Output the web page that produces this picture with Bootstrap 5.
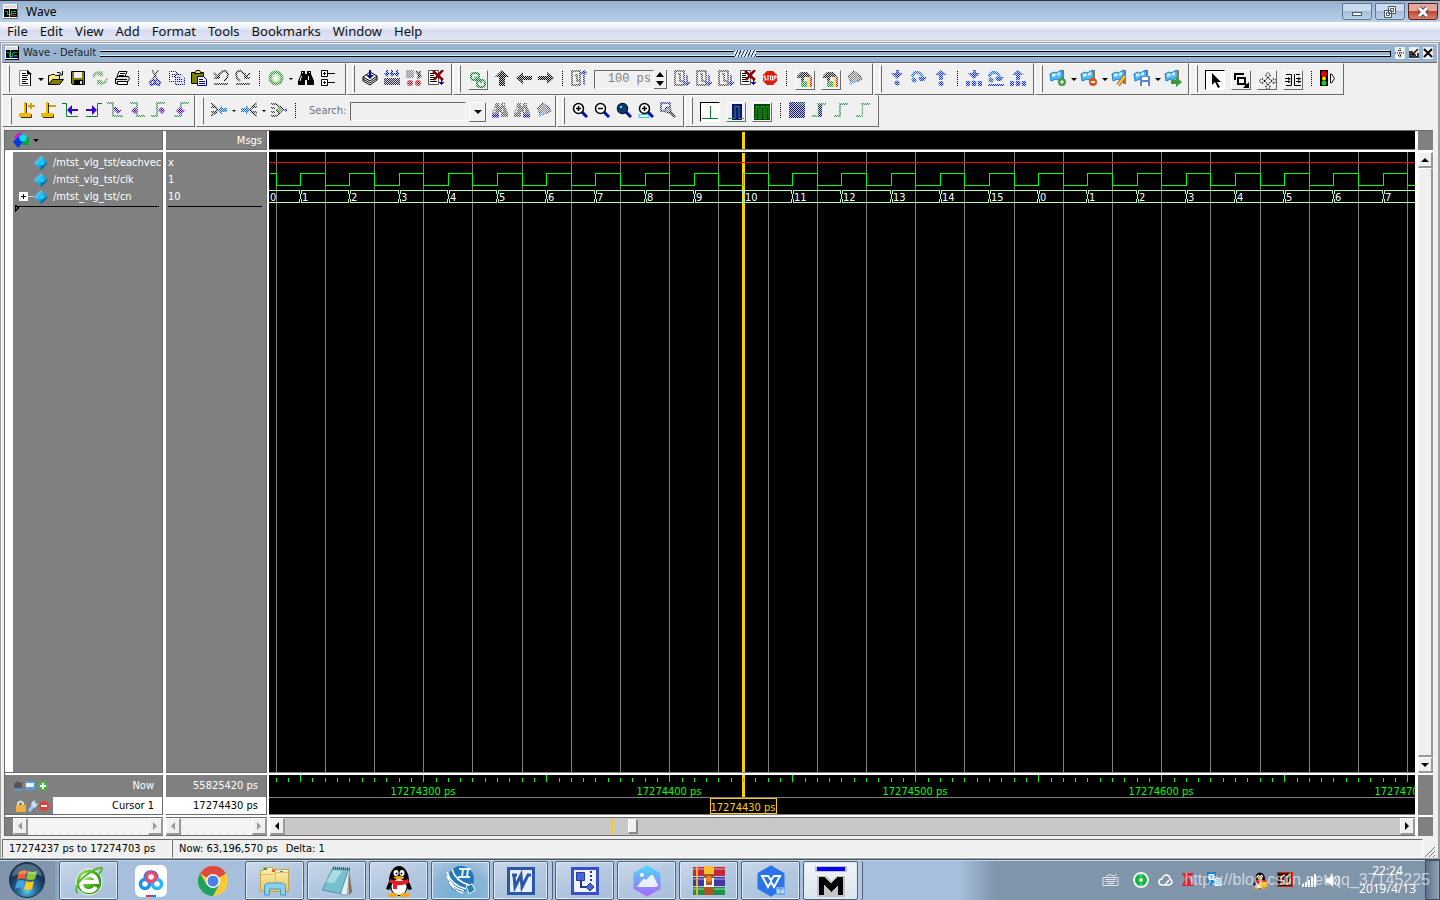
<!DOCTYPE html>
<html lang="en">
<head>
<meta charset="utf-8">
<meta name="viewport" content="width=device-width, initial-scale=1">
<title>Wave</title>
<link href="https://cdn.jsdelivr.net/npm/bootstrap@5.3.0/dist/css/bootstrap.min.css" rel="stylesheet">
<style>
:root{--face:#f0f0f0;--edge:#6b6b6b;--pane:#808080;--bar:#99b4d1}
body{font:11px/16px "DejaVu Sans Condensed","DejaVu Sans",sans-serif;color:#000;background:var(--face)}
button{border:0;padding:0;background:none;color:inherit;font:inherit}
svg{display:block;flex:none}
.crisp{shape-rendering:crispEdges}
.titlebar{height:22px;padding-left:3px;background:linear-gradient(#97b1d0,#b9d1ea);border-top:1px solid #303338;font:12px/20px "Noto Sans",sans-serif}
.caps{gap:3px;padding:2px 2px 0 0}
.cap{width:30px;height:17px;border:1px solid #5d7694;border-radius:0 0 3px 3px;background:linear-gradient(#c9dbec 45%,#a4bdd7 50%,#bdd3e8)}
.cap.shut{border-color:#5b1f22;background:linear-gradient(#e4a79b 45%,#c04a32 50%,#d88068)}
.menus{height:19px;gap:12px;padding-left:7px;background:linear-gradient(#fff,#e6eaf5 40%,#d6dcef 45%,#e0e6f6);font:13px/19px "Noto Sans",sans-serif;border-bottom:1px solid #b6bccc}
.menus a{color:#111;text-decoration:none}
.shell{border:1px solid #a0a0a0;border-width:1px 2px 1px 1px;margin-top:1px;min-height:0}
.docbar{height:19px;background:var(--bar);border-bottom:1px solid var(--edge);margin:1px 1px 0;padding-left:3px;line-height:18px;color:#1c2430}
.docbar .rails{height:7px;border-top:1px solid #d8f2fa;border-bottom:1px solid #000;border-right:1px solid #000;background:linear-gradient(#000 1px,transparent 1px 4px,#d8f2fa 4px 5px,transparent 5px);background-color:var(--bar)}
.rails i{display:block;width:22px;height:7px;background:repeating-linear-gradient(115deg,#26384c 0 1px,#d8e8f4 1px 3px)}
.mini{width:10px;height:12px;background:var(--face)}
.bars{padding-left:1px}
.grp{border:1px solid var(--edge);border-left-color:#fff;border-top-color:#fff;height:32px;padding:0 4px;margin-right:1px}
.grp::before{content:"";width:3px;height:28px;border:1px solid #fff;border-right-color:var(--edge);margin-right:4px;flex:none}
.grp.roomy{padding-right:6px}
.grp.cursors{padding:0 2px 0 6px}
.grp.tight{padding-right:0}
.tb{width:22px;height:25px;padding-bottom:3px;display:flex;align-items:center;justify-content:center;flex:none}
.drop{width:9px;height:8px;display:flex;align-items:center;justify-content:center;flex:none}
.drop::after{content:"";border:3px solid transparent;border-top-color:#000;border-bottom:0}
.drop.off{width:8px}
.drop.off::after{border-width:2px;border-bottom:0}
.sep{width:11px;height:16px;flex:none;background:repeating-linear-gradient(#000 0 1px,transparent 1px 2px) center/1px 100% no-repeat}
.off>svg{-webkit-mask:conic-gradient(#000 25%,rgba(0,0,0,.15) 0 50%,#000 0 75%,rgba(0,0,0,.15) 0) 0 0/2px 2px;mask:conic-gradient(#000 25%,rgba(0,0,0,.15) 0 50%,#000 0 75%,rgba(0,0,0,.15) 0) 0 0/2px 2px}
.boxed{width:20px;height:20px;padding:0;border:1px solid #fff;border-right-color:var(--edge);border-bottom-color:var(--edge);margin:1px 3px 0}
.boxed.slim{width:17px}
.boxed.on{background:#fff;border-color:#000 #fff #fff #000}
.sunk{border:1px solid #fff;border-top-color:var(--edge);border-left-color:var(--edge);border-radius:0;background:var(--face);height:19px;padding:0 2px;color:#808080;min-width:0}
#runlen{width:60px;font:12px "Liberation Mono",monospace}
#search{width:116px}
.spin{width:13px;height:19px;border-right:1px solid var(--edge);border-bottom:1px solid var(--edge)}
.wavegrid{display:grid;grid-template-columns:158px 101px minmax(0,1fr) 15px;grid-template-rows:19px minmax(0,1fr) 40px 19px;gap:2px 3px;background:#fff;border:1px solid var(--edge);border-width:1px 0 0 1px;margin:3px 5px 0 3px;min-height:0}
.pane{background:var(--pane);color:#fff;border-bottom:1px solid var(--edge);border-right:1px solid var(--edge);min-width:0;overflow:hidden}
.blank{background:var(--pane)}
.scope{background:#000;border-bottom:1px solid var(--pane);margin-left:-1px;min-width:0;overflow:hidden}
.scope svg{width:100%;height:100%}
.listing{padding-top:2px}
.vals{padding:3px 4px 0 2px}
.sig{height:17px;gap:5px}
.sig.leaf{padding-left:21px}
.sig.node{padding-left:5px}
.sig.node svg+svg{margin-left:-5px}
.nowrow{height:22px}
.currow{height:17px;line-height:18px;background:#fff;color:#000}
.sbar{display:flex;border-top:1px solid var(--edge);border-bottom:1px solid var(--edge)}
.sbtn{width:15px;background:var(--face);border:1px solid #fff;border-right:2px solid #999;border-bottom:2px solid #999;display:flex;align-items:center;justify-content:center;flex:none}
.sbtn.tall{height:16px}
.hatch{background:conic-gradient(#fff 25%,#eee 0 50%,#fff 0 75%,#eee 0) 0 0/2px 2px}
.track{background:#c8c8c8;position:relative}
.thumb{position:absolute;top:1px;bottom:1px;width:10px;background:var(--face);border:1px solid #fff;border-right:2px solid #888;border-bottom:2px solid #888}
.mark-at{position:absolute;top:1px;bottom:1px;width:2px;background:#ffd000}
.status{height:19px;margin:3px 1px 0}
.status .cell{border:1px solid #fff;border-top-color:var(--edge);border-left-color:var(--edge);padding-left:6px;line-height:18px}
.range{width:170px}
.taskbar{height:41px;border-top:1px solid #46586c;position:relative;background:linear-gradient(90deg,#8195ad 0,#8195ad 54px,#a5bfdc 62px,#a5bfdc 66.6%,#8094aa 69.2%);box-shadow:inset 0 1px #c0d4e8}
.start{width:59px}
.task{width:59px;height:39px;margin-right:3px;margin-top:1px;display:flex;align-items:center;justify-content:center;border:1px solid transparent;border-radius:2px;flex:none}
.task.open{border-color:#4f637b;background:linear-gradient(160deg,#cbd8e9,#b3c8e0 50%,#a8bfdb);box-shadow:inset 0 0 0 1px #dde7f2}
.task.lit{background:radial-gradient(circle at 50% 90%,#6eb0d8,#8bb5d6 60%,#b4cce2)}
.task.front{background:linear-gradient(#f2f6fa,#dbe5f0)}
.task.pile{width:55px;margin-right:7px;box-shadow:inset 0 0 0 1px #dde7f2,4px 0 #b3c8e0,5px 0 #4f637b}
.tray{gap:9px}
.tray .gap-in{width:12px}
.clock{font:12px/18px "Noto Sans",sans-serif;color:#fff}
.peek{width:15px;border:1px solid #3f4f62;background:linear-gradient(90deg,#5d7086,#93a4b6)}
.stamp{position:absolute;right:10px;top:9px;font:16px/22px "Liberation Sans",sans-serif;color:rgba(255,255,255,.62)}
</style>
</head>
<body class="vh-100 overflow-hidden d-flex flex-column">

<svg width="0" height="0" class="position-absolute" aria-hidden="true">
<defs>
<linearGradient id="cy" x2="1" y2="1"><stop stop-color="#9ee8ff"/><stop offset=".5" stop-color="#10b0e8"/><stop offset="1" stop-color="#0560a0"/></linearGradient>
<linearGradient id="fold" x2="0" y2="1"><stop stop-color="#fdf3b8"/><stop offset="1" stop-color="#e9c65c"/></linearGradient>
<linearGradient id="pic" x2="0" y2="1"><stop stop-color="#4fd3fb"/><stop offset="1" stop-color="#a66cff"/></linearGradient>
<radialGradient id="orb" cx=".5" cy=".8"><stop stop-color="#5fd0f0"/><stop offset=".5" stop-color="#2a6c9c"/><stop offset="1" stop-color="#173a5c"/></radialGradient>
<radialGradient id="ball" cx=".35" cy=".3"><stop stop-color="#b8f080"/><stop offset="1" stop-color="#34a010"/></radialGradient>
<symbol id="app" viewBox="0 0 16 16"><path fill="#777" d="M0 0h16v16H0z"/><path fill="#fff" d="M0 0h15v15H0z"/><path fill="#ddd" d="M1 1h13v3H1z"/><path d="M1 5h14v9H1z"/><path fill="none" stroke="#1fb040" d="M2 7.500h3v4h4v-4h5M10 10.500h4"/><path stroke="#e7d31a" d="M6.500 5v9"/><path stroke="#d02030" d="M9 12.500h5"/></symbol>
<symbol id="appb" viewBox="0 0 16 16"><path d="M0 0h16v16H0z"/><path fill="#fff" d="M0 0h15v15H0z"/><path fill="#ddd" d="M1 1h13v3H1z"/><path d="M1 5h14v9H1z"/><path fill="none" stroke="#1fb040" d="M2 7.500h3v4h4v-4h5M10 10.500h4"/><path stroke="#20c8d8" d="M6.500 5v9"/><path stroke="#2030d0" d="M9 12.500h5"/></symbol>
<symbol id="new" viewBox="0 0 16 16"><path fill="#fff" stroke="#888" d="M2.500.5h8l3 3v12h-11z"/><path stroke="#000" d="M5 3.500h4M5 5.500h6M5 7.500h5M5 9.500h6M5 11.500h4M5 13.500h6M13.500 4v12M10.500 0v4h4"/></symbol>
<symbol id="folder" viewBox="0 0 16 16"><path fill="#ffef70" stroke="#000" d="M.5 14.500v-9h2l1-1h3l1 1h4v4"/><path fill="#808000" stroke="#000" d="M.5 14.500l4-5h11l-4 5z"/><path fill="none" stroke="#000" d="M9 2.500h2l2 1 1 1M14.500 1v4h-4"/></symbol>
<symbol id="disk" viewBox="0 0 16 16"><path fill="#808000" stroke="#000" d="M1.500 1.500h13v13h-12l-1-1z"/><path fill="#eee" d="M4 2h8v6H4z"/><path d="M4 10h9v4H4z"/><path fill="#ddd" d="M10 11h2v3h-2z"/></symbol>
<symbol id="cycle" viewBox="0 0 16 16"><path fill="#60a060" d="M0 7l2-4 4-2 4 1 1-1v5H6l1-2-3 1-2 3zM16 8l-2 5-4 2-4-1-1 1v-5h5l-1 2 4-1 2-3z"/></symbol>
<symbol id="print" viewBox="0 0 16 16"><path fill="#fff" stroke="#000" d="M5 1.500h8l-2 5H3z"/><path fill="#ddd" stroke="#000" d="M1.500 8.500l3-2h10l1 2-3 5h-11z"/><path fill="#fff" stroke="#000" d="M3.500 11.500h10v3h-10zM6 3.500h5M5 5.500h5M1 9.500h12"/></symbol>
<symbol id="cut" viewBox="0 0 16 16"><path fill="none" stroke="#223" stroke-width="1.500" d="M5 0l5 9M11 0L6 9"/><g fill="none" stroke="#0000ff" stroke-width="2"><path d="M7 9l-4 3 1 3 3-1 1-4M9 9l4 3-1 3-3-1-1-4"/></g></symbol>
<symbol id="copy" viewBox="0 0 16 16"><path fill="#fff" stroke="#222" d="M.5 1.500h6l3 3v7h-9z"/><path fill="#ddf" stroke="#001090" d="M6.500 4.500h6l3 3v7h-9z"/><path stroke="#001090" d="M8 7.500h4M8 9.500h6M8 11.500h6M2 4.500h4M2 6.500h4"/></symbol>
<symbol id="paste" viewBox="0 0 16 16"><path fill="#808000" stroke="#000" d="M.5 2.500h12v11H.5z"/><path fill="#ffe840" stroke="#000" d="M3.500 3.500l2-3h3l2 3z"/><path fill="#fff" stroke="#000080" d="M6.500 6.500h6l3 3v6h-9z"/><path stroke="#000080" d="M8 9.500h4M8 11.500h6M8 13.500h6"/></symbol>
<symbol id="undo" viewBox="0 0 16 16"><path fill="none" stroke="#000" stroke-width="1.500" d="M1 3l5 5M6 3v5H1M7 4l3-3h3l2 3-1 4-3 3M1 14h14"/></symbol>
<symbol id="globe" viewBox="0 0 16 16"><circle cx="8" cy="8" r="6" fill="#aee7a6" stroke="#3a9a3a" stroke-width="3"/><path fill="#fff" d="M6 4l5 4-5 4z"/></symbol>
<symbol id="find" viewBox="0 0 16 16"><path d="M3 1h4v3h2V1h4v3l3 7v4H9v-5H7v5H0v-4l3-7z"/><path stroke="#fff" d="M3.500 6L2 11M10.500 6v4M4.500 2v1M11.500 2v1"/></symbol>
<symbol id="tree" viewBox="0 0 16 16"><path fill="#fff" stroke="#000" d="M1.500.5h6v6h-6zM1.500 9.500h6v6h-6zM8 3.500h7M8 12.500h7M3 3.500h3M4.500 2v3M3 12.500h3M4.500 11v3"/></symbol>
<symbol id="stack" viewBox="0 0 16 16"><path fill="#fff" stroke="#000" d="M1 11l7 4 7-5M1 9l7 4 7-5M1 7l7 4 7-5-7-4zM1 7v4M15 6v4"/><path fill="#001090" d="M7 0h2v5h3L8 9 4 5h3z"/></symbol>
<symbol id="rain" viewBox="0 0 16 16"><path fill="#334" d="M0 8h16v7H0z"/><path fill="#0010b0" d="M2 0h2v3h2L3 7 0 3h2zM7 0h2v3h2L8 7 5 3h2zM12 0h2v3h2l-3 4-3-4h2z"/></symbol>
<symbol id="brk" viewBox="0 0 16 16"><path fill="#889" d="M0 0h8v8H0z"/><path stroke="#222" stroke-width="2" d="M10 1l5 6M14 1l-2 8"/><circle cx="4" cy="13" r="3" fill="#d01020"/><circle cx="12" cy="13" r="3" fill="#d01020"/></symbol>
<symbol id="pagex" viewBox="0 0 16 16"><path fill="#fff" stroke="#555" d="M.5.500h10v14H.5z"/><path stroke="#000" d="M2 3.500h6M2 5.500h4M2 7.500h5M2 9.500h4M2 11.500h7"/><path stroke="#8c0008" stroke-width="2.500" d="M5 1l10 9M15 0L6 10"/><path stroke="#0010b0" d="M13.500 9v6M11 12.500h5M12 13.500h3"/></symbol>
<symbol id="links" viewBox="0 0 16 16"><g fill="none" stroke="#007a20" stroke-width="2"><rect x="1" y="1" width="8" height="7" rx="3"/><rect x="7" y="8" width="8" height="7" rx="3"/><path d="M5 5l7 6"/></g></symbol>
<symbol id="aup" viewBox="0 0 16 16"><path d="M8 0l7 7h-4v9H5V7H1z"/></symbol>
<symbol id="aleft" viewBox="0 0 16 16"><path d="M0 8l7-6v4h9v4H7v4z"/></symbol>
<symbol id="pgu" viewBox="0 0 16 16"><path fill="none" stroke="#333" stroke-width="1.500" d="M1 1h8v14H1zM4 5h2v6h2"/><path fill="none" stroke="#0010b0" stroke-width="1.500" d="M13 15V1M10 4l3-3 3 3"/></symbol>
<symbol id="pgd" viewBox="0 0 16 16"><path fill="none" stroke="#333" stroke-width="1.500" d="M1 1h9v14H1zM4 4h2v7h3"/><path fill="none" stroke="#0010b0" stroke-width="1.500" d="M13 5v10M10 12l3 3 3-3"/></symbol>
<symbol id="bug" viewBox="0 0 18 18"><path fill="#222" d="M1 5l4-4h6l4 4-2 3-2-2H8v4H5V7H1z"/><path fill="#20a040" d="M5 10h6v6H5z"/><path fill="#ffe000" d="M11 6h3v10h-3z"/><path fill="#f01010" d="M14 6h2v10h-2z"/></symbol>
<symbol id="hand" viewBox="0 0 16 16"><path fill="#888" stroke="#222" d="M1 6l6-5 6 5 2 3-4 2-6 2z"/><path stroke="#70a0e0" stroke-width="3" d="M3 14l7-5"/></symbol>
<symbol id="stepin" viewBox="0 0 16 16"><path fill="#1030ff" d="M7 0h3v3h4L8 9 2 3h5z"/><circle cx="8" cy="13" r="2.500" fill="#1030ff"/></symbol>
<symbol id="stepover" viewBox="0 0 16 16"><path fill="none" stroke="#2070ff" stroke-width="3" d="M1 7c2-7 8-6 11 1"/><path fill="#1030ff" d="M7 7h9l-3 4H9z"/><circle cx="3" cy="10" r="2.500" fill="#2050f0"/></symbol>
<symbol id="stepout" viewBox="0 0 16 16"><path fill="#1840ff" d="M8 0l6 5h-4v5H6V5H2z"/><circle cx="8" cy="13.500" r="2.500" fill="#1030ff"/></symbol>
<symbol id="dots" viewBox="0 0 16 16"><path fill="#1030ff" d="M0 11h4v5H0zM6 11h4v5H6zM12 11h4v5h-4z"/></symbol>
<symbol id="flag" viewBox="0 0 18 18"><path fill="#a87838" d="M11 1h4v14h-3z"/><path fill="#56b8f4" stroke="#1c80d0" d="M1 5l4-2 2 1 6-3 1 7-5 3-2-1-5 2z"/><path fill="#c8eeff" d="M3 5l3-1 1 3-4 1zM8 4l3-1v3L8 7z"/></symbol>
<symbol id="zoom" viewBox="0 0 16 16"><path stroke="#0010c0" stroke-width="3" d="M10 10l5 5"/><circle cx="6.500" cy="6.500" r="5" fill="#fff" stroke="#000" stroke-width="1.500"/></symbol>
<symbol id="flask" viewBox="0 0 16 16"><path fill="none" stroke="#332800" d="M7.500 1v11M2 15.500h10.500v-3"/><path fill="none" stroke="#f0b800" stroke-width="2" d="M6 0v11M1 12h10v2H1z"/></symbol>
<symbol id="edgel" viewBox="0 0 18 16"><path fill="none" stroke="#0a8030" d="M0 1.500h4.500v13H16"/><path fill="#3a00d8" d="M5 8l5-5v4h6v2h-6v4z"/></symbol>
<symbol id="edgef" viewBox="0 0 16 16"><path fill="none" stroke="#0a8030" stroke-width="1.500" d="M0 1h6v13h10"/><path fill="#5000d0" d="M7 5h3l1 3h4l-4 4-4-4z"/></symbol>
<symbol id="edger" viewBox="0 0 16 16"><path fill="none" stroke="#0a8030" stroke-width="1.500" d="M1 14h7V1h8"/><path fill="#5000d0" d="M3 9l4-4 5 4-5 3z"/></symbol>
<symbol id="fan" viewBox="0 0 16 16"><path fill="none" stroke="#111" stroke-width="1.500" d="M0 1l5 4M0 5h4l3 3-3 2H0M0 14l6-4"/><path fill="#0070ff" d="M7 8l4-5v3h5v4h-5v3z"/></symbol>
<symbol id="gem" viewBox="0 0 14 14"><path fill="url(#cy)" d="M7 0l7 7-7 7-7-7z"/><path fill="#20c4ff" d="M4 5h6v4H4z"/><path fill="#075a88" d="M7 14l7-7-4 2-3 1z" opacity=".7"/></symbol>
<symbol id="rise" viewBox="0 0 16 16"><path fill="none" stroke="#0a8030" stroke-width="1.500" d="M1 14h6V2h8"/></symbol>
<symbol id="pads" viewBox="0 0 16 16"><path fill="#fff" stroke="#000" stroke-dasharray="1 1" d="M5 8l3-3 3 3-3 3zM8 5L6 3l2-3 2 3zM8 11l-2 2 2 3 2-3zM5 8L3 6 0 8l3 2zM11 8l2-2 3 2-3 2z"/></symbol>
<symbol id="penguin" viewBox="0 0 28 32"><ellipse cx="14" cy="16" rx="10" ry="15"/><path d="M5 14L1 24l3 1 4-5zM23 14l4 10-3 1-4-5z"/><ellipse cx="14" cy="22" rx="7.500" ry="8" fill="#fff"/><ellipse cx="11" cy="8" rx="2.500" ry="3" fill="#fff"/><ellipse cx="17" cy="8" rx="2.500" ry="3" fill="#fff"/><circle cx="11.500" cy="8.500" r="1"/><circle cx="16.500" cy="8.500" r="1"/><ellipse cx="14" cy="12.500" rx="5" ry="1.500" fill="#ffa800"/><path fill="#e81c24" d="M5 14q9 4 18 0l1 4q-8 3-12 2v4H8v-5l-4-2z"/><ellipse cx="8" cy="30" rx="5" ry="2" fill="#ffa800"/><ellipse cx="20" cy="30" rx="5" ry="2" fill="#ffa800"/></symbol>
</defs></svg>

<header class="titlebar d-flex align-items-center">
  <svg class="crisp" width="15" height="15"><use href="#app"/></svg><span class="ms-2">Wave</span>
  <div class="caps ms-auto d-flex align-self-start">
    <button class="cap" aria-label="Minimize"><svg class="mx-auto" width="12" height="12"><rect x="1.500" y="6.500" width="9" height="3" fill="#fff" stroke="#48586c"/></svg></button>
    <button class="cap" aria-label="Restore"><svg class="mx-auto" width="12" height="12"><path fill="#fff" stroke="#48586c" d="M4.500.5h7v7h-7zM6.500 2.500h3v3h-3zM.5 4.500h7v7h-7zM2.500 6.500h3v3h-3z"/></svg></button>
    <button class="cap shut" aria-label="Close"><svg class="mx-auto" width="12" height="12"><path stroke="#5a4048" stroke-width="5" d="M2 2l8 8M10 2l-8 8"/><path stroke="#fff" stroke-width="3" d="M2 2l8 8M10 2l-8 8"/></svg></button>
  </div>
</header>
<nav class="menus d-flex flex-shrink-0" aria-label="Main">
  <a href="#">File</a><a href="#">Edit</a><a href="#">View</a><a href="#">Add</a><a href="#">Format</a><a href="#">Tools</a><a href="#">Bookmarks</a><a href="#">Window</a><a href="#">Help</a>
</nav>

<main class="shell flex-grow-1 d-flex flex-column">
  <div class="docbar d-flex align-items-center gap-1 flex-shrink-0 pe-1">
    <svg class="crisp" width="14" height="16"><use href="#appb"/></svg><span>Wave - Default</span>
    <div class="rails flex-grow-1 d-flex justify-content-center align-items-center"><i></i></div>
    <button class="mini" aria-label="Undock"><svg width="10" height="12"><path fill="none" stroke="#000" stroke-dasharray="1 1" d="M5 1v10M0 6h10M3 3.500h4M3 8.500h4"/></svg></button>
    <button class="mini" aria-label="Dock"><svg width="10" height="12"><path fill="none" stroke="#000" stroke-width="1.500" d="M1 4v6h8V6M3 8l6-6M3 4v4h4"/></svg></button>
    <button class="mini" aria-label="Close pane"><svg width="10" height="12"><path stroke="#000" stroke-width="2" d="M1 2l8 8M9 2l-8 8"/></svg></button>
  </div>

  <div class="flex-shrink-0">
    <div class="bars d-flex">
      <div class="grp roomy d-flex align-items-center">
        <button class="tb" aria-label="New"><svg width="16" height="16"><use href="#new"/></svg></button><button class="drop" aria-label="New options"></button>
        <button class="tb" aria-label="Open"><svg width="16" height="16"><use href="#folder"/></svg></button>
        <button class="tb" aria-label="Save"><svg width="16" height="16"><use href="#disk"/></svg></button>
        <button class="tb off" aria-label="Reload"><svg width="16" height="16"><use href="#cycle"/></svg></button>
        <button class="tb" aria-label="Print"><svg width="16" height="16"><use href="#print"/></svg></button><span class="sep"></span>
        <button class="tb off" aria-label="Cut"><svg width="16" height="16"><use href="#cut"/></svg></button>
        <button class="tb off" aria-label="Copy"><svg width="16" height="16"><use href="#copy"/></svg></button>
        <button class="tb" aria-label="Paste"><svg width="16" height="16"><use href="#paste"/></svg></button>
        <button class="tb off" aria-label="Undo"><svg width="16" height="16"><use href="#undo"/></svg></button>
        <button class="tb off" aria-label="Redo"><svg width="16" height="16"><g transform="matrix(-1 0 0 1 16 0)"><use href="#undo"/></g></svg></button><span class="sep"></span>
        <button class="tb off" aria-label="Add"><svg width="16" height="16"><use href="#globe"/></svg></button><button class="drop off" aria-label="Add options"></button>
        <button class="tb" aria-label="Find"><svg width="16" height="16"><use href="#find"/></svg></button>
        <button class="tb" aria-label="Collapse"><svg width="16" height="16"><use href="#tree"/></svg></button>
      </div>
      <div class="grp d-flex align-items-center">
        <button class="tb" aria-label="Compile"><svg width="16" height="16"><use href="#stack"/></svg></button>
        <button class="tb off" aria-label="Compile all"><svg width="16" height="16"><use href="#rain"/></svg></button>
        <button class="tb off" aria-label="Simulate"><svg width="16" height="16"><use href="#brk"/></svg></button>
        <button class="tb" aria-label="Break"><svg width="16" height="16"><use href="#pagex"/></svg></button>
      </div>
      <div class="grp roomy d-flex align-items-center">
        <button class="tb boxed off" aria-label="Environment"><svg width="16" height="16"><use href="#links"/></svg></button>
        <button class="tb off" aria-label="Up"><svg width="16" height="16"><use href="#aup"/></svg></button>
        <button class="tb off" aria-label="Back"><svg width="16" height="16"><use href="#aleft"/></svg></button>
        <button class="tb off" aria-label="Forward"><svg width="16" height="16"><g transform="matrix(-1 0 0 1 16 0)"><use href="#aleft"/></g></svg></button><span class="sep"></span>
        <button class="tb off" aria-label="Restart"><svg width="16" height="16"><use href="#pgu"/></svg></button>
        <input class="sunk text-end ms-1" id="runlen" aria-label="Run length" value="100 ps">
        <div class="spin d-flex flex-column justify-content-around align-items-center"><svg width="8" height="16"><path d="M0 6l4-5 4 5zM0 10h8l-4 5z"/></svg></div>
        <button class="tb off ms-1" aria-label="Run"><svg width="16" height="16"><use href="#pgd"/></svg></button>
        <button class="tb off" aria-label="Continue run"><svg width="16" height="16"><use href="#pgd"/></svg></button>
        <button class="tb off" aria-label="Run all"><svg width="16" height="16"><use href="#pgd"/></svg></button>
        <button class="tb" aria-label="Break run"><svg width="16" height="16"><use href="#pagex"/></svg></button>
        <button class="tb" aria-label="Stop"><svg width="14" height="14" viewBox="0 0 14 14"><path fill="#e01808" d="M4 0h6l4 4v6l-4 4H4l-4-4V4z"/><path fill="none" stroke="#fff" d="M3 5H1v2h2v2H1M4 5h2.500M5 5v4.500M7.500 5h2v4h-2zM11 9.500V5h2v2h-2"/></svg></button><span class="sep"></span>
        <button class="tb boxed off" aria-label="Profile"><svg width="18" height="18"><use href="#bug"/></svg></button>
        <button class="tb boxed off" aria-label="Memory profile"><svg width="18" height="18"><use href="#bug"/></svg></button>
        <button class="tb off" aria-label="Edit"><svg width="16" height="16"><use href="#hand"/></svg></button>
      </div>
      <div class="grp d-flex align-items-center">
        <button class="tb off" aria-label="Step into"><svg width="16" height="16"><use href="#stepin"/></svg></button>
        <button class="tb off" aria-label="Step over"><svg width="16" height="16"><use href="#stepover"/></svg></button>
        <button class="tb off" aria-label="Step out"><svg width="16" height="16"><use href="#stepout"/></svg></button><span class="sep"></span>
        <button class="tb off" aria-label="Step in current"><svg width="16" height="16"><use href="#stepin"/><use href="#dots"/></svg></button>
        <button class="tb off" aria-label="Step over current"><svg width="16" height="16"><use href="#stepover"/><path stroke="#1030ff" stroke-width="2" d="M0 15h16"/></svg></button>
        <button class="tb off" aria-label="Step out current"><svg width="16" height="16"><use href="#stepout"/><use href="#dots"/></svg></button>
      </div>
      <div class="grp d-flex align-items-center">
        <button class="tb" aria-label="Add bookmark"><svg width="18" height="18"><use href="#flag"/><circle cx="13" cy="13" r="4" fill="#4a9a4a"/><path stroke="#fff" d="M11 13h4M13 11v4"/></svg></button><button class="drop" aria-label="Add bookmark options"></button>
        <button class="tb" aria-label="Delete bookmark"><svg width="18" height="18"><use href="#flag"/><circle cx="13" cy="13" r="4" fill="#e65018"/><path stroke="#fff" stroke-width="2" d="M11 13h4"/></svg></button><button class="drop" aria-label="Delete bookmark options"></button>
        <button class="tb" aria-label="Manage bookmarks"><svg width="18" height="18"><use href="#flag"/><path stroke="#b07018" stroke-width="4" d="M7 16l7-9"/><path stroke="#ffd060" stroke-width="2" d="M7 16l7-9"/></svg></button>
        <button class="tb" aria-label="Save bookmarks"><svg width="18" height="18"><use href="#flag"/><path fill="#5a80d8" d="M7 7h10v10H7z"/><path fill="#fff" d="M9 8h6v3H9zM9 13h6v4H9z"/></svg></button><button class="drop" aria-label="Save bookmark options"></button>
        <button class="tb" aria-label="Go to bookmark"><svg width="18" height="18"><use href="#flag"/><path fill="#3c9838" d="M7 11h5V8l6 5-6 5v-3H7z"/></svg></button>
      </div>
      <div class="grp d-flex align-items-center">
        <button class="tb boxed on" aria-label="Select mode"><svg width="14" height="16"><path d="M4 1v12l3-3 3 6 2-1-3-5h4z"/></svg></button>
        <button class="tb boxed" aria-label="Zoom mode"><svg width="16" height="16"><path fill="none" stroke="#000" stroke-width="2" d="M2 8V2h9M5 6h7v6H5zM12 12l3 3"/><path d="M16 10v6h-6z"/></svg></button>
        <button class="tb boxed" aria-label="Pan mode"><svg width="18" height="18"><g transform="translate(1 1)"><use href="#pads"/></g></svg></button>
        <button class="tb boxed" aria-label="Edit mode"><svg width="16" height="16"><path fill="none" stroke="#000" d="M1 2.500h5.500v11H1M9.500 2v11.500H16M0 6.500h5M0 9.500h5M11 6.500h5M11 9.500h5M11 2.500h4"/><path d="M3 5l3 2-3 1zM3 8l3 2-3 1zM13 5l3 2-3 1zM13 8l3 2-3 1z"/></svg></button><span class="sep"></span>
        <button class="tb" aria-label="Stop drawing"><svg width="16" height="18"><path d="M0 1h8v16H0z"/><circle cx="4" cy="5" r="3" fill="#f00000"/><circle cx="4" cy="9.500" r="2" fill="#f8e000"/><circle cx="4" cy="14" r="2.500" fill="#18c828"/><path fill="#fff" stroke="#000" d="M10.500 5v9h1l3-4.500-3-4.500z"/></svg></button>
      </div>
    </div>

    <div class="bars d-flex">
      <div class="grp cursors d-flex align-items-center">
        <button class="tb" aria-label="Insert cursor"><svg width="16" height="16"><use href="#flask"/><path stroke="#d0a000" stroke-width="2" d="M9 4h7M12 1v6"/></svg></button>
        <button class="tb" aria-label="Delete cursor"><svg width="16" height="16"><use href="#flask"/><path stroke="#d0a000" stroke-width="2" d="M8 4h7"/></svg></button>
        <button class="tb" aria-label="Previous transition"><svg width="18" height="16"><use href="#edgel"/></svg></button>
        <button class="tb" aria-label="Next transition"><svg width="18" height="16"><g transform="matrix(-1 0 0 1 18 0)"><use href="#edgel"/></g></svg></button>
        <button class="tb off" aria-label="Previous falling edge"><svg width="16" height="16"><use href="#edgef"/></svg></button>
        <button class="tb off" aria-label="Next falling edge"><svg width="16" height="16"><path fill="none" stroke="#0a8030" stroke-width="1.500" d="M1 1h7v13h8"/><path fill="#5000d0" d="M2 9l4-4 3 4-3 3z"/></svg></button>
        <button class="tb off" aria-label="Previous rising edge"><svg width="16" height="16"><path fill="none" stroke="#0a8030" stroke-width="1.500" d="M0 14h6V1h8"/><path fill="#5000d0" d="M7 8l4-3 3 3-3 4z"/></svg></button>
        <button class="tb off" aria-label="Next rising edge"><svg width="16" height="16"><use href="#edger"/></svg></button>
      </div>
      <div class="grp tight d-flex align-items-center">
        <button class="tb off" aria-label="Drivers"><svg width="16" height="16"><use href="#fan"/></svg></button><button class="drop off" aria-label="Driver options"></button>
        <button class="tb off" aria-label="Readers"><svg width="16" height="16"><g transform="matrix(-1 0 0 1 16 0)"><use href="#fan"/></g></svg></button><button class="drop off" aria-label="Reader options"></button>
        <button class="tb off" aria-label="Connectivity"><svg width="16" height="16"><path fill="none" stroke="#111" stroke-width="1.500" d="M0 2h5l4 3M0 6h4M0 10h4M0 14h5l4-3"/><path fill="#50a050" stroke="#111" d="M5 8l4-4 4 4-4 4z"/><circle cx="15" cy="8" r="1.500" fill="#00f"/></svg></button><span class="sep"></span>
        <label for="search" class="mx-1 ps-1 text-secondary">Search:</label>
        <input class="sunk" id="search">
        <button class="boxed slim" aria-label="Search history"><svg class="mx-auto" width="8" height="6"><path d="M0 1h8L4 5z"/></svg></button>
        <button class="tb off" aria-label="Find previous"><svg width="16" height="16"><use href="#find" opacity=".6"/><path stroke="#00f" stroke-width="3" d="M0 14h7"/></svg></button>
        <button class="tb off" aria-label="Find next"><svg width="16" height="16"><use href="#find" opacity=".6"/><path stroke="#00f" stroke-width="3" d="M9 14h7"/></svg></button>
        <button class="tb off" aria-label="Search options"><svg width="16" height="16"><use href="#hand"/></svg></button>
      </div>
      <div class="grp d-flex align-items-center">
        <button class="tb" aria-label="Zoom in"><svg width="16" height="16"><use href="#zoom"/><path stroke="#000" stroke-width="1.500" d="M4 6.500h5M6.500 4v5"/></svg></button>
        <button class="tb" aria-label="Zoom out"><svg width="16" height="16"><use href="#zoom"/><path stroke="#000" stroke-width="1.500" d="M4 6.500h5"/></svg></button>
        <button class="tb" aria-label="Zoom full"><svg width="16" height="16"><use href="#zoom"/><circle cx="6.500" cy="6.500" r="5" fill="#083c70"/><path fill="#8cf" d="M4 4h2v2H4z"/></svg></button>
        <button class="tb" aria-label="Zoom on cursor"><svg width="16" height="16"><path fill="#fff" stroke="#20d0e8" d="M1 12.500h10v3H1z"/><use href="#zoom"/><path stroke="#000" stroke-width="1.500" d="M4 6.500h5M6.500 4v5"/></svg></button>
        <button class="tb off" aria-label="Zoom range"><svg width="16" height="16"><path fill="none" stroke="#0010a0" stroke-width="1.500" d="M1 1h9v5M1 1v8h4"/><circle cx="8" cy="8" r="3" fill="#888" stroke="#000"/><path stroke="#222" stroke-width="3" d="M10 10l5 5"/></svg></button>
      </div>
      <div class="grp d-flex align-items-center">
        <button class="tb boxed on" aria-label="Line view"><svg width="18" height="18"><path stroke="#0a8030" d="M1 15.500h16M9.500 3v12"/></svg></button>
        <button class="tb boxed" aria-label="Pulse view"><svg width="18" height="18"><path fill="#101080" d="M5 1h10v16H5z"/><path fill="none" stroke="#20a040" d="M1 15.500h7v-12h4v12h5"/></svg></button>
        <button class="tb boxed" aria-label="Clock view"><svg width="18" height="18"><path fill="#004400" d="M1 1h16v16H1z"/><path fill="none" stroke="#20a020" d="M1 15.500h2v-12h3v12h2v-12h3v12h2v-12h3v12"/></svg></button><span class="sep"></span>
        <button class="tb off" aria-label="Solid"><svg width="16" height="16"><path fill="#101080" d="M0 0h16v16H0z"/><path stroke="#0a0" d="M6 2h10"/></svg></button>
        <button class="tb off" aria-label="Edge one"><svg width="16" height="16"><path fill="#101090" d="M7 2h4v13H7z"/><use href="#rise"/><path stroke="#ee0" d="M6.500 2v12"/></svg></button>
        <button class="tb off" aria-label="Edge two"><svg width="16" height="16"><use href="#rise"/></svg></button>
        <button class="tb off" aria-label="Edge three"><svg width="16" height="16"><use href="#rise"/><path stroke="#ee0" d="M6.500 2v12"/></svg></button>
      </div>
    </div>
  </div>

  <section class="wavegrid flex-grow-1" aria-label="Waveforms">
    <div class="pane d-flex align-items-center ps-2"><svg width="18" height="16"><path fill="#10a050" d="M9 5h7v8H9z"/><path fill="#c020d0" d="M1 5l6-5 3 3-6 5z"/><path fill="#0838e0" d="M5 5l5 5-5 6-5-6z"/><circle cx="10" cy="6" r="3.500" fill="#00e0f0"/></svg><button class="drop" aria-label="Object types"></button></div>
    <div class="pane text-end pe-1 pt-1 lh-1">Msgs</div>
    <div class="scope"><svg class="crisp" id="head"></svg></div>
    <div class="blank"></div>

    <div class="pane d-flex">
      <div class="bg-white flex-shrink-0 ps-2"></div>
      <div class="flex-grow-1 listing">
        <div class="sig leaf d-flex align-items-center"><svg width="14" height="14"><use href="#gem"/></svg><span>/mtst_vlg_tst/eachvec</span></div>
        <div class="sig leaf d-flex align-items-center"><svg width="14" height="14"><use href="#gem"/></svg><span>/mtst_vlg_tst/clk</span></div>
        <div class="sig node d-flex align-items-center"><svg class="crisp" width="16" height="11"><path fill="#fff" d="M1 1h9v9H1z"/><path stroke="#000" d="M3 5.500h5M5.500 3v5"/><path stroke="#ccc" d="M10 5.500h6"/></svg><svg width="14" height="14"><use href="#gem"/></svg><span>/mtst_vlg_tst/cn</span></div>
        <svg class="crisp" width="146" height="7"><path fill="none" stroke="#000" d="M2.500 0v6l3-3zM4 1.500h142"/></svg>
      </div>
    </div>
    <div class="pane vals"><div class="sig">x</div><div class="sig">1</div><div class="sig">10</div><hr class="m-0 opacity-100 text-black"></div>
    <div class="scope"><svg class="crisp" id="waves"></svg></div>
    <div class="d-flex flex-column border-end border-2 border-secondary">
      <button class="sbtn tall" aria-label="Scroll up"><svg width="8" height="4"><path d="M0 4l4-4 4 4z"/></svg></button>
      <div class="sbtn flex-grow-1"></div>
      <button class="sbtn tall" aria-label="Scroll down"><svg width="8" height="4"><path d="M0 0h8L4 4z"/></svg></button>
    </div>

    <div class="pane">
      <div class="nowrow d-flex align-items-center ps-2"><svg width="36" height="12"><path fill="#555" d="M1 4l3-3 3 2 2-1v6H1z"/><path fill="#5a9ad8" d="M1 9h9v2H1zM12 1h10v9H12z"/><path fill="#e8f4ff" d="M13 3h8v4h-8z"/><circle cx="30" cy="6" r="5" fill="#50b048"/><path stroke="#fff" stroke-width="2" d="M27 6h6M30 3v6"/></svg><span class="ms-auto me-2">Now</span></div>
      <div class="currow d-flex"><span class="blank d-flex align-items-center ps-2 pe-1"><svg width="36" height="12"><path fill="none" stroke="#ddd" stroke-width="2" d="M5 6V3q3-3 5 0v3"/><path fill="#eeb040" d="M3 5h10v7H3z"/><path stroke="#9cf" stroke-width="3" d="M16 11l5-6"/><path fill="#cde" d="M19 2l3-2v3l3 1-3 4-4-3z"/><circle cx="31" cy="6" r="5" fill="#e04038"/><path stroke="#fff" stroke-width="2" d="M28 6h6"/></svg></span><span class="ms-auto me-2">Cursor 1</span></div>
    </div>
    <div class="pane text-end"><div class="nowrow d-flex align-items-center justify-content-end pe-2">55825420 ps</div><div class="currow pe-2">17274430 ps</div></div>
    <div class="scope"><svg class="crisp" id="ruler"></svg></div>
    <div class="blank"></div>

    <div class="sbar blank ps-2"><button class="sbtn" aria-label="Names left"><svg width="4" height="8"><path fill="#999" d="M4 0v8L0 4z"/></svg></button><div class="hatch flex-grow-1"></div><button class="sbtn" aria-label="Names right"><svg width="4" height="8"><path fill="#999" d="M0 0v8l4-4z"/></svg></button></div>
    <div class="sbar"><button class="sbtn" aria-label="Values left"><svg width="4" height="8"><path fill="#999" d="M4 0v8L0 4z"/></svg></button><div class="hatch flex-grow-1"></div><button class="sbtn" aria-label="Values right"><svg width="4" height="8"><path fill="#999" d="M0 0v8l4-4z"/></svg></button></div>
    <div class="sbar"><button class="sbtn" aria-label="Time left"><svg width="4" height="8"><path d="M4 0v8L0 4z"/></svg></button><div class="track flex-grow-1"><i class="mark-at" style="left:29.200%"></i><i class="thumb" style="left:30.800%"></i></div><button class="sbtn" aria-label="Time right"><svg width="4" height="8"><path d="M0 0v8l4-4z"/></svg></button></div>
    <div class="blank"></div>
  </section>

  <footer class="status d-flex flex-shrink-0">
    <div class="cell range">17274237 ps to 17274703 ps</div>
    <div class="cell flex-grow-1 d-flex gap-2"><span>Now: 63,196,570 ps</span><span>Delta: 1</span></div>
    <svg class="align-self-end" width="14" height="12"><path stroke="#777" d="M2 11l10-10M6 11l6-6M10 11l2-2"/></svg>
  </footer>
</main>

<nav class="taskbar d-flex flex-shrink-0" aria-label="Taskbar">
  <button class="start ps-2 flex-shrink-0" aria-label="Start"><svg width="38" height="38" viewBox="0 0 38 38"><circle cx="19" cy="19" r="17.500" fill="url(#orb)" stroke="#1a3048"/><path fill="#f0602c" d="M11 11q4-3 8-1l-2 8q-4-2-8 1z"/><path fill="#8cc63c" d="M20 10q4 2 9 0l-2 8q-4 2-9 0z"/><path fill="#40a0e8" d="M9 20q4-2 8 0l-2 8q-4-3-8 0z"/><path fill="#fcc824" d="M18 20q4 2 8 0l-2 8q-4 2-8 0z"/><path fill="#fff" opacity=".25" d="M4 15Q7 3 19 3t15 12q-15-5-30 0z"/></svg></button>
  <button class="task open" aria-label="Browser"><svg width="30" height="32" viewBox="0 0 30 32"><circle cx="15" cy="17" r="13" fill="url(#ball)" stroke="#fff"/><path fill="none" stroke="#fff" stroke-width="4" d="M8 17h15q-1-7-8-7t-8 8q0 8 8 8 5 0 7-4"/><path fill="none" stroke="#5cb82c" stroke-width="2" d="M3 28q-3-8 8-17T28 3q0 3-3 6"/></svg></button>
  <button class="task" aria-label="Cloud disk"><svg width="32" height="32"><rect width="32" height="32" rx="6" fill="#fff"/><g fill="none" stroke-width="3.500"><path stroke="#1878f0" d="M10 14q0-7 6-7t6 7"/><circle cx="10" cy="19" r="4.500" stroke="#1890f8"/><circle cx="22" cy="19" r="4.500" stroke="#28b8f8"/><circle cx="16" cy="12" r="4.500" stroke="#f04868"/></g><path fill="#e83048" d="M11 30h5v2h-5z"/><path fill="#1878f0" d="M16 30h5v2h-5z"/></svg></button>
  <button class="task" aria-label="Chrome"><svg width="30" height="30" viewBox="-15 -15 30 30"><circle r="15" fill="#fbcb3c"/><path fill="#dd4b3e" d="M0 0L-13-7.500A15 15 0 0 1 13-7.500z"/><path fill="#1da261" d="M-13-7.500A15 15 0 0 0 0 15L6 4-6 4z"/><circle r="7" fill="#fff"/><circle r="5.500" fill="#4a80e8"/></svg></button>
  <button class="task open" aria-label="File Explorer"><svg width="32" height="30"><path fill="url(#fold)" stroke="#c8a448" d="M1.500 4.500h3v-3h9v2h16v22h-28z"/><path fill="#20a040" d="M5 2h3v2H5z"/><path fill="#e06020" d="M13 4h3v2h-3z"/><path fill="#2090d8" d="M21 5h3v2h-3z"/><path fill="none" stroke="#e0bc60" d="M2 8.500h12l2-2h13M16.500 7v18"/><path fill="#8cd0f0" stroke="#4a98c8" d="M5.500 29v-10l3-2h15l3 2v10h-5v-6h-11v6z"/></svg></button>
  <button class="task open" aria-label="Notepad"><svg width="32" height="30"><path fill="#8a7040" d="M28 3l3 23-3 3z"/><path fill="#e8eef0" stroke="#8a9a9c" d="M11.500 2l17 1-2 26-6 0z"/><path fill="#78c0cc" stroke="#4a94a4" d="M11.500 2.500l16 1-8 24L1.500 24z"/><path fill="#c0e8ee" d="M12 4l9 1-8 12-8-1z" opacity=".7"/><path stroke="#556" stroke-dasharray="1 1" stroke-width="3" d="M12 2l17 1"/></svg></button>
  <button class="task open" aria-label="QQ"><svg width="28" height="32"><use href="#penguin"/></svg></button>
  <button class="task open lit" aria-label="Quartus II"><svg width="30" height="30"><circle cx="15" cy="13" r="13" fill="#2478b8"/><path fill="none" stroke="#fff" stroke-width="1.500" d="M1 6q4 13 19 17M1 10q4 11 17 15M3 16q4 8 14 11M6 3q3 12 17 16"/><path fill="none" stroke="#e8f4fc" stroke-width="2" d="M13 3h12M12 11h12M17 3l-1 8M22 3l-1 8"/><path fill="#2080c0" stroke="#fff" d="M20 20l6-2 3 6-6 4z"/></svg></button>
  <button class="task open pile" aria-label="Word"><svg width="28" height="28"><path fill="#2b57a8" d="M0 0h28v28H0z"/><path fill="#e8effa" d="M3 3h22v22H3z"/><path fill="none" stroke="#2b57a8" stroke-width="3" d="M5 8h5M7 8l1 12 6-12 1 12 6-12h3"/></svg></button>
  <button class="task open" aria-label="Visio"><svg width="28" height="28"><path fill="#3a50c8" d="M0 0h28v28H0z"/><path fill="#f0f3fc" d="M3 3h22v22H3z"/><path fill="#4868d8" stroke="#2438a0" d="M5.500 5.500h8v8h-8zM15 20l4-4 4 4-4 4z"/><path fill="none" stroke="#2438a0" stroke-width="2" d="M10 14v6h5"/><path stroke="#2438a0" stroke-width="2" stroke-dasharray="2 2" d="M20 4v12"/></svg></button>
  <button class="task open" aria-label="Photos"><svg width="28" height="32"><path fill="url(#pic)" stroke="url(#pic)" stroke-width="3" stroke-linejoin="round" d="M14 2l12 7v14l-12 7-12-7V9z"/><path fill="#fff" opacity=".85" d="M4 22l6-8q2-1 3 1l5-5q2-1 3 2l4 8q0 2-2 2z"/><circle cx="9" cy="10" r="2" fill="#fff"/></svg></button>
  <button class="task open" aria-label="WinRAR"><svg width="32" height="30"><path fill="#c02840" d="M0 1h32v9H0z"/><path fill="#4038a0" d="M0 11h32v9H0z"/><path fill="#209048" d="M0 21h32v8H0z"/><path fill="#fff" opacity=".3" d="M0 2h32v2H0zM0 12h32v2H0zM0 22h32v2H0z"/><path stroke="#f0b020" stroke-width="2" d="M4 1v28"/><path fill="#a85820" d="M11 0h10v29H11z"/><path fill="#f8c030" d="M11 0h10v8H11z"/><path fill="none" stroke="#fff" stroke-width="2" d="M12 12v8h8v-8"/><circle cx="16" cy="13" r="3" fill="#f08820"/></svg></button>
  <button class="task open" aria-label="WPS"><svg width="28" height="32"><path fill="#2874e8" stroke="#2874e8" stroke-width="3" stroke-linejoin="round" d="M14 2l12 7v14l-12 7-12-7V9z"/><path fill="none" stroke="#fff" stroke-width="2" d="M5 11h6l3 4 3-4h6l-6 11-3-5-3 5z"/><rect x="19" y="22" width="9" height="8" rx="1" fill="#70a8f8"/><path fill="none" stroke="#fff" d="M21 24v4l2.500-2 2.500 2v-4"/></svg></button>
  <button class="task open pile front" aria-label="ModelSim"><svg class="crisp" width="32" height="32"><path fill="#c4c4c4" d="M0 1h32v6H0zM2 11h9l5 5 5-5h9v21H2z"/><path fill="#00f" d="M2 2h28v4H2z"/><path d="M4 12h6l6 7 6-7h6v18h-5V20l-7 7-7-7v10H4z"/></svg></button>

  <div class="tray ms-auto d-flex align-items-center">
    <svg width="18" height="14"><path fill="none" stroke="#e4e8ec" d="M1 4.500h15v8H1zM3 6.500h11M3 8.500h11M5 10.500h7M4 3q4-3 8 0l3-2"/></svg>
    <svg class="ms-1" width="16" height="16"><circle cx="8" cy="8" r="7" fill="#10b840" stroke="#e8f8ec" stroke-width="2"/><circle cx="8" cy="8" r="2" fill="#fff"/><path stroke="#fff" d="M8 2v3M8 11v3" opacity=".6"/></svg>
    <svg width="15" height="12"><path fill="none" stroke="#fff" stroke-width="1.500" d="M4 11q-3 0-3-3t3-3q1-4 5-4 3 1 3 4 2 1 2 3t-3 3zM7 11l4-5"/></svg>
    <svg width="12" height="14"><path fill="#e02030" d="M0 0h12l-5 6 5 7H0l3-7z"/></svg>
    <svg class="ms-1" width="15" height="16"><path fill="#1880d8" d="M0 0h9v13H0z"/><path fill="#9cc8f0" stroke="#fff" d="M2 2.500h5v5H2zM8 6.500h6v7H8z"/></svg>
    <span class="gap-in"></span>
    <svg width="16" height="17" viewBox="0 0 28 32"><use href="#penguin"/><path fill="#ffb830" d="M12 18h16v10H12z"/></svg>
    <svg width="16" height="16"><path fill="#301010" stroke="#e02010" d="M.5.500h15v14H.5z"/><path fill="none" stroke="#e8c8b0" stroke-width="1.500" d="M8 3L4 5v3l3 1v3H3M13 2l-3 3v7l3-2V7"/></svg>
    <svg width="15" height="13"><path fill="#fff" d="M0 10h2v3H0zM3 8h2v5H3zM6 6h2v7H6zM9 3h2v10H9zM12 0h2v13h-2z"/></svg>
    <svg width="16" height="14"><path fill="#fff" d="M0 5h3l4-4v13L3 10H0z"/><path fill="none" stroke="#fff" d="M9 4q3 3 0 7M11 2q5 5 0 11"/></svg>
    <div class="clock text-center ms-2">22:24<br>2019/4/13</div>
    <button class="peek align-self-stretch" aria-label="Show desktop"></button>
  </div>
  <div class="stamp">https://blog.csdn.net/qq_37145225</div>
</nav>

<script src="https://cdn.jsdelivr.net/npm/bootstrap@5.3.0/dist/js/bootstrap.bundle.min.js"></script>
<script>
// Time axis: 2.46 px per ps, 17274300 ps lies 154 px into the pane.
const NS = 'http://www.w3.org/2000/svg', CURSOR = 430;
const at = t => Math.round(154.2 + (t - 300) * 2.46);
function add(id, tag, attrs, text) {
  const el = document.createElementNS(NS, tag);
  for (const k in attrs) el.setAttribute(k, attrs[k]);
  if (text !== undefined) el.textContent = text;
  document.getElementById(id).appendChild(el);
}
const bar = (id, x, y, w, h, fill) => add(id, 'rect', {x, y, width: w, height: h, fill});

function draw() {
  for (const id of ['head', 'waves', 'ruler']) document.getElementById(id).replaceChildren();
  const end = document.getElementById('waves').getBoundingClientRect().width;

  for (let t = 240; at(t) < end; t += 20) bar('waves', at(t), 0, 1, '100%', '#808080');
  bar('waves', at(CURSOR) - 1, 1, 3, '100%', '#ffd000');
  bar('waves', 0, 10, '100%', 1, '#f00');

  let clk = 'M0 22H' + at(240);
  for (let t = 240; at(t) < end; t += 20) clk += 'V34H' + at(t + 10) + 'V22H' + at(t + 20);
  add('waves', 'path', {d: clk, fill: 'none', stroke: '#0f0', transform: 'translate(.5 -.5)'});

  for (let t = 230, v = 0; at(t) < end; t += 20, v = (v + 1) % 16) {
    const a = at(t), b = at(t + 20);
    add('waves', 'path', {fill: 'none', stroke: '#b4ffb4', transform: 'translate(.5 -.5)',
      d: `M${a + 1} 39H${b - 1}V42L${b} 43V47L${b - 1} 48V51H${a + 1}V48L${a} 47V43L${a + 1} 42Z`});
    add('waves', 'text', {x: Math.max(a + 2, 1), y: 49, fill: '#fff'}, v);
  }

  bar('head', at(CURSOR) - 1, 1, 3, 18, '#ffd000');
  bar('ruler', at(CURSOR) - 1, 0, 3, 22, '#ffd000');
  bar('ruler', 0, 22, '100%', 1, '#808080');
  for (let t = 240; at(t) < end; t += 5) {
    const big = t % 50 === 0;
    bar('ruler', at(t), big ? 0 : 3, 1, big ? 7 : 4, '#0f0');
  }
  for (let t = 300; at(t) - 31 < end; t += 100)
    add('ruler', 'text', {x: at(t), y: 20, fill: '#0f0', 'text-anchor': 'middle'}, 17274000 + t + ' ps');
  add('ruler', 'rect', {x: at(CURSOR) - 33, y: 23, width: 66, height: 15, fill: '#000', stroke: '#ffd000'});
  add('ruler', 'text', {x: at(CURSOR), y: 36, fill: '#ffd000', 'text-anchor': 'middle'}, '17274430 ps');
}
draw();
addEventListener('resize', draw);
</script>
</body>
</html>
